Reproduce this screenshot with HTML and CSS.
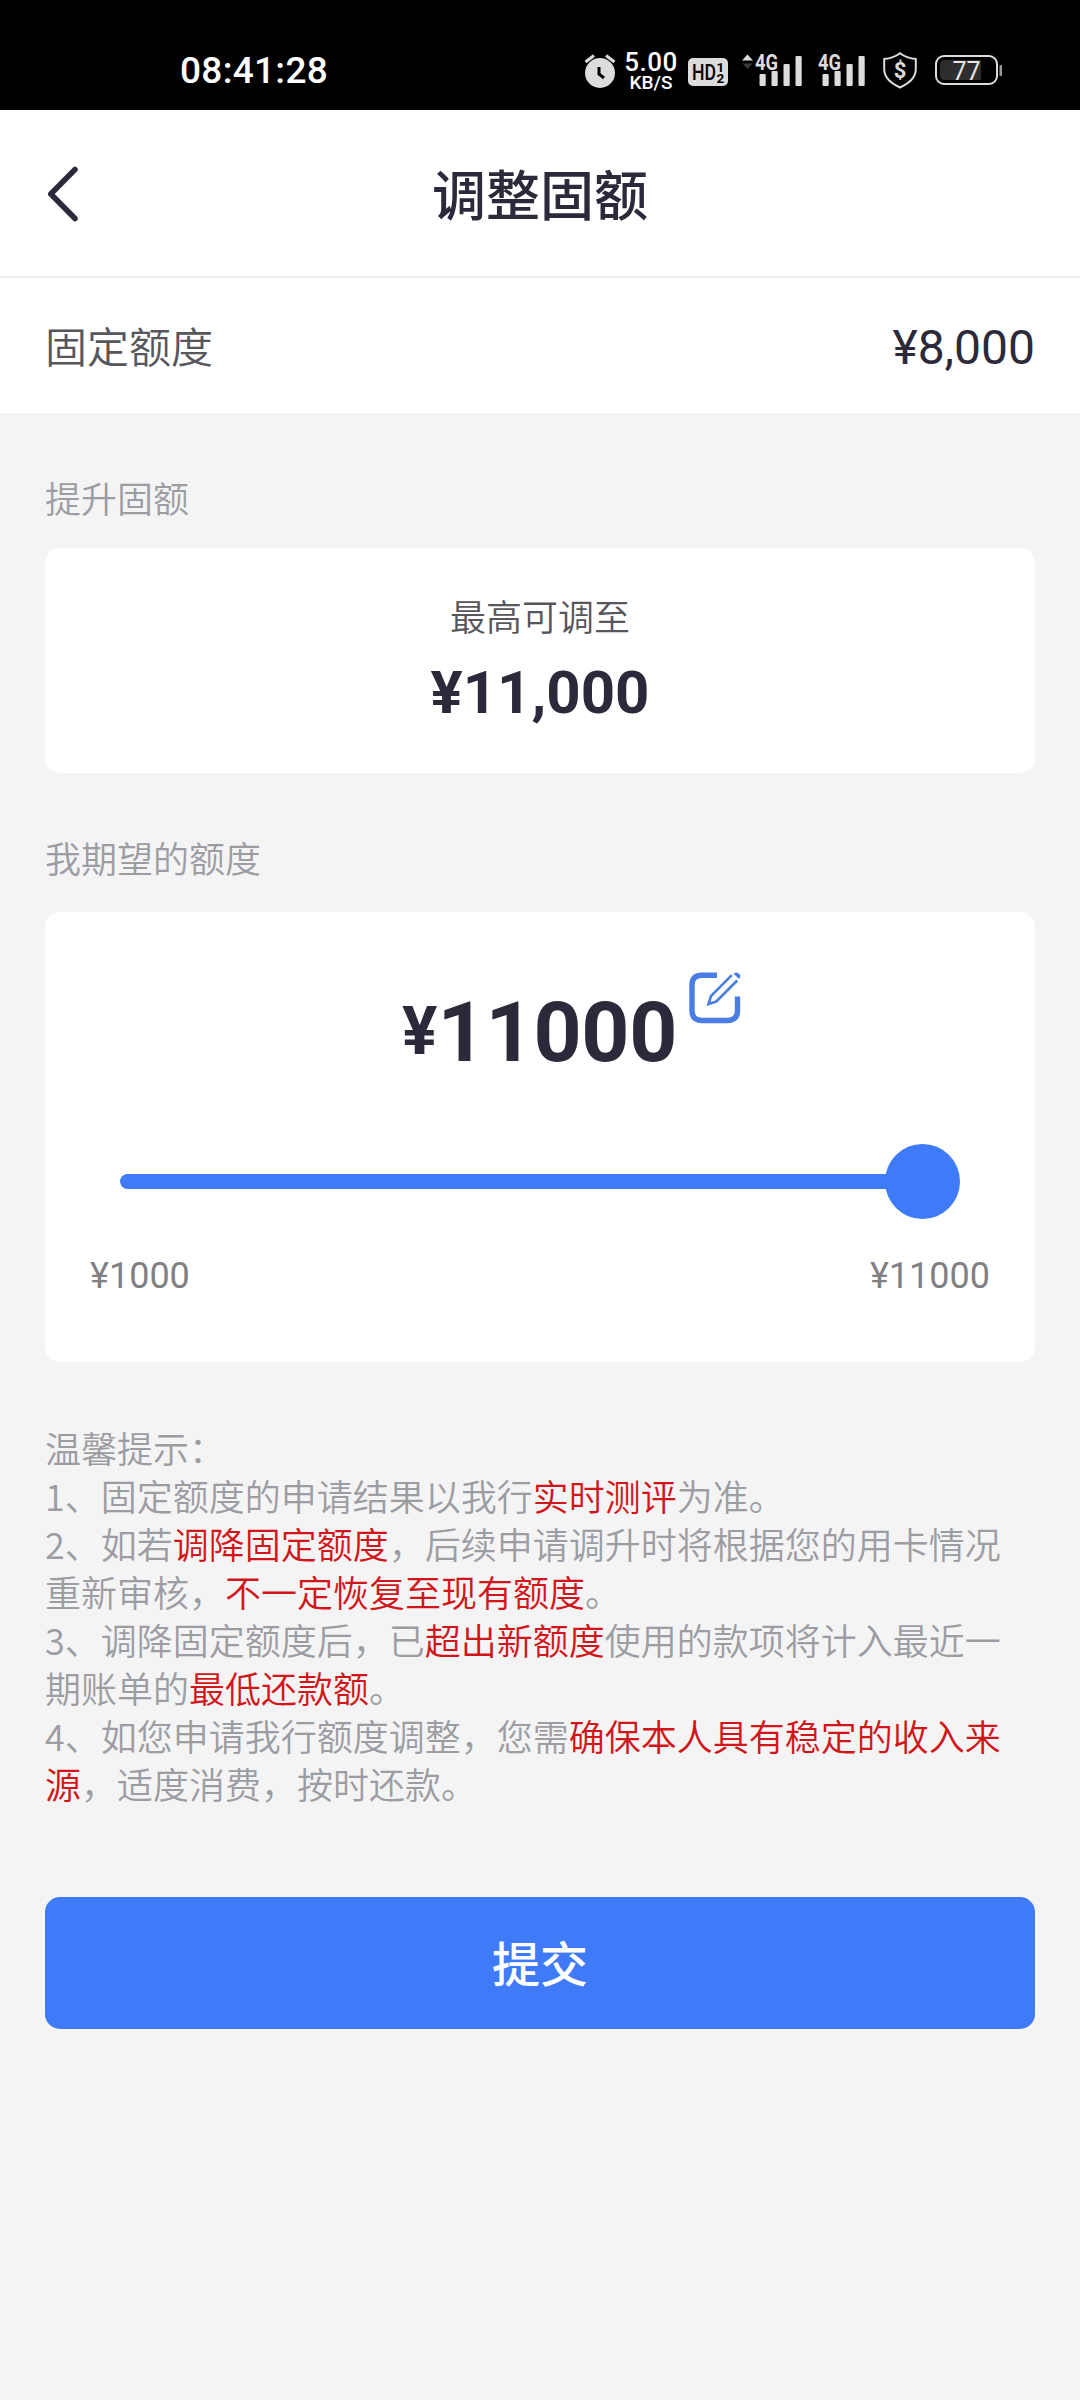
FILE: index.html
```html
<!DOCTYPE html>
<html lang="zh-CN">
<head>
<meta charset="utf-8">
<title>调整固额</title>
<link rel="stylesheet" href="styles.css">
</head>
<body>
<div class="status">
  <span class="clock">08:41:28</span>
  <div class="status-icons">
    <svg class="ic-alarm" width="32" height="36" viewBox="0 0 32 36">
      <circle cx="16" cy="20" r="15" fill="#dcdcdc"/>
      <path d="M1.500 9 L10 2.500 M30.500 9 L22 2.500" stroke="#dcdcdc" stroke-width="3" fill="none"/>
      <path d="M15 14 V21 L20 25" stroke="#000" stroke-width="3" fill="none"/>
    </svg>
    <div class="speed"><span class="speed-num">5.00</span><span class="speed-unit">KB/S</span></div>
    <svg class="ic-hd" width="40" height="28" viewBox="0 0 40 28">
      <rect width="40" height="28" rx="5" fill="#dcdcdc"/>
      <text x="4" y="22" font-size="22" font-weight="500" textLength="24" lengthAdjust="spacingAndGlyphs">HD</text>
      <text x="28.500" y="13.500" font-size="13.500" font-weight="700">1</text>
      <text x="28.500" y="25" font-size="13.500" font-weight="700">2</text>
    </svg>
    <svg class="ic-sig1" width="60" height="38" viewBox="0 -4 60 38">
      <path d="M0 7.500 L5.500 1.500 L11 7.500Z" fill="#dcdcdc"/>
      <path d="M0.500 10.500 L5.500 16 L10.500 10.500Z" fill="#3a3a3a"/>
      <text x="13" y="17" font-size="21.500" font-weight="700" fill="#dcdcdc" textLength="23" lengthAdjust="spacingAndGlyphs">4G</text>
      <g fill="#dcdcdc"><rect x="17.500" y="21" width="6.200" height="12" rx="1"/><rect x="29.500" y="18" width="6.200" height="15" rx="1"/><rect x="41.500" y="11" width="6.200" height="22" rx="1"/><rect x="53.500" y="3" width="6.200" height="30" rx="1"/></g>
    </svg>
    <svg class="ic-sig2" width="47" height="38" viewBox="13 -4 47 38">
      <text x="13" y="17" font-size="21.500" font-weight="700" fill="#dcdcdc" textLength="23" lengthAdjust="spacingAndGlyphs">4G</text>
      <g fill="#dcdcdc"><rect x="17.500" y="21" width="6.200" height="12" rx="1"/><rect x="29.500" y="18" width="6.200" height="15" rx="1"/><rect x="41.500" y="11" width="6.200" height="22" rx="1"/><rect x="53.500" y="3" width="6.200" height="30" rx="1"/></g>
    </svg>
    <svg class="ic-shield" width="34" height="37" viewBox="0 0 34 37">
      <path d="M17 1.200 C12 5 7 6.500 1.200 7 V17 C1.200 26 8 31 17 35.500 C26 31 32.800 26 32.800 17 V7 C27 6.500 22 5 17 1.200Z" fill="none" stroke="#dcdcdc" stroke-width="2"/>
      <text x="17" y="26" font-size="22" font-weight="700" fill="#dcdcdc" text-anchor="middle">$</text>
    </svg>
    <svg class="ic-bat" width="68" height="30" viewBox="0 0 68 30">
      <rect x="1" y="1" width="61" height="28" rx="8" fill="none" stroke="#dcdcdc" stroke-width="2"/>
      <path d="M10 5 H46 V25 H10 Q5 25 5 20 V10 Q5 5 10 5Z" fill="#2e2e2e"/>
      <text x="17.500" y="24.500" font-size="25" fill="#e6e6e6" textLength="28">77</text>
      <rect x="64.500" y="10" width="2.500" height="11" rx="1" fill="#999"/>
    </svg>
  </div>
</div>
<header class="navbar">
  <svg class="back" width="32" height="56" viewBox="0 0 32 56"><path d="M27 3.500 L2.800 28 L27 52.500" fill="none" stroke="#2c2a3a" stroke-width="5.500" stroke-linecap="round" stroke-linejoin="round"/></svg>
  <h1 class="title">调整固额</h1>
</header>
<div class="limit-row"><span class="limit-label">固定额度</span><span class="limit-value">¥8,000</span></div>
<main class="content">
  <div class="section-label">提升固额</div>
  <section class="card max-card">
    <div class="max-label">最高可调至</div>
    <div class="max-value">¥11,000</div>
  </section>
  <div class="section-label expect-label">我期望的额度</div>
  <section class="card expect-card">
    <div class="amount">
      <span class="yen">¥</span><span class="number">11000</span>
      <svg class="edit" width="52" height="52" viewBox="0 0 52 52" fill="none" stroke="#4a7ee6">
        <path d="M28 3.200 H13 Q3 3.200 3 13 V38.500 Q3 48.500 13 48.500 H38.500 Q48.500 48.500 48.500 38.500 V24.500" stroke-width="5.400"/>
        <path d="M42.800 3.200 L22 24 L19.500 32 L27.300 29.500 L48.200 8.500" stroke-width="2.600"/>
        <path d="M18.300 33.300 L20 28 L23.500 31.500Z" fill="#4a7ee6" stroke="none"/>
        <path d="M44.500 1.500 Q48 -0.800 50.300 2 Q52.500 4.500 50 7Z" fill="#4a7ee6" stroke="none"/>
      </svg>
    </div>
    <div class="slider"><div class="track"></div><div class="thumb"></div></div>
    <div class="range"><span>¥1000</span><span>¥11000</span></div>
  </section>
  <div class="tips">
    <p>温馨提示：</p>
    <p>1、固定额度的申请结果以我行<em>实时测评</em>为准。</p>
    <p>2、如若<em>调降固定额度</em>，后续申请调升时将根据您的用卡情况重新审核，<em>不一定恢复至现有额度</em>。</p>
    <p>3、调降固定额度后，已<em>超出新额度</em>使用的款项将计入最近一期账单的<em>最低还款额</em>。</p>
    <p>4、如您申请我行额度调整，您需<em>确保本人具有稳定的收入来源</em>，适度消费，按时还款。</p>
  </div>
  <button class="submit">提交</button>
</main>
</body>
</html>
```
FILE: styles.css
```css
* { box-sizing: border-box; margin: 0; padding: 0; }
body {
  width: 1080px;
  height: 2400px;
  overflow: hidden;
  background: #f4f4f4;
  color: #2c2a3a;
  font-family: Roboto, "Noto Sans CJK SC", sans-serif;
}
svg { display: block; flex: none; }
.status {
  height: 110px;
  background: #000;
  display: flex;
  align-items: flex-start;
  padding-left: 180px;
  color: #fff;
}
.clock {
  width: 148px;
  margin-top: 49px;
  font-size: 37px;
  line-height: 44px;
  font-weight: 500;
  letter-spacing: 0.3px;
  white-space: nowrap;
}
.status-icons { display: flex; align-items: flex-start; margin-left: 256px; }
.ic-alarm { margin-top: 53px; }
.speed {
  width: 54px;
  margin: 49px 0 0 8px;
  display: flex;
  flex-direction: column;
  align-items: center;
  font-weight: 500;
}
.speed-num { font-size: 26px; line-height: 26px; letter-spacing: 0.5px; }
.speed-unit { font-size: 19px; line-height: 16px; }
.ic-hd { margin: 58px 0 0 10px; }
.ic-sig1 { margin: 49px 0 0 14px; }
.ic-sig2 { margin: 49px 0 0 16px; }
.ic-shield { margin: 52px 0 0 18px; }
.ic-bat { margin: 55px 0 0 18px; }
.navbar {
  height: 168px;
  background: #fff;
  border-bottom: 2px solid #ececec;
  display: grid;
  grid-template-columns: 1fr auto 1fr;
  align-items: center;
  padding: 0 48px;
}
.back { margin-top: 2px; }
.title { font-size: 54px; line-height: 70px; font-weight: 500; margin-top: 9px; }
.limit-row {
  height: 135px;
  background: #fff;
  display: flex;
  align-items: center;
  justify-content: space-between;
  padding: 0 45px;
}
.limit-label { font-size: 42px; line-height: 60px; margin-top: 6px; color: #56565c; font-weight: 350; }
.limit-value { font-size: 48px; margin-top: 3px; }
.content { display: flex; flex-direction: column; padding: 62px 45px 0; }
.section-label { font-size: 36px; line-height: 52px; color: #9c9da3; font-weight: 350; }
.card { background: #fff; border-radius: 15px; display: flex; flex-direction: column; }
.max-card { height: 225px; margin-top: 21px; padding-top: 45px; align-items: center; }
.max-label { font-size: 36px; line-height: 52px; color: #56565c; font-weight: 350; }
.max-value { font-size: 60px; line-height: 70px; font-weight: 700; margin-top: 13px; }
.expect-label { margin-top: 62px; }
.expect-card { height: 450px; margin-top: 25px; padding: 60px 45px 0; }
.amount { display: flex; height: 100px; margin-left: 312px; font-weight: 700; }
.yen { font-size: 66px; line-height: 76px; margin-top: 22px; }
.number { font-size: 84px; line-height: 98px; margin-top: 12px; letter-spacing: -0.2px; }
.edit { margin-left: 12px; }
.slider { display: flex; align-items: center; height: 75px; margin: 72px 30px 0; }
.track { flex: 1; height: 15px; background: #3f7af8; border-radius: 8px 0 0 8px; margin-right: -5px; }
.thumb { width: 75px; height: 75px; border-radius: 50%; background: #3f7af8; }
.range {
  display: flex;
  justify-content: space-between;
  margin-top: 36px;
  font-size: 36px;
  line-height: 42px;
  color: #808084;
}
.tips {
  margin-top: 61px;
  font-family: "Noto Sans CJK SC", sans-serif;
  font-size: 36px;
  line-height: 48px;
  color: #9c9da3;
  font-weight: 350;
}
.tips em { font-style: normal; color: #d0161b; }
.submit {
  height: 132px;
  margin-top: 90px;
  padding-top: 5px;
  border: 0;
  border-radius: 15px;
  background: #3f7af8;
  color: #fff;
  font: 500 48px/70px Roboto, "Noto Sans CJK SC", sans-serif;
}
```
